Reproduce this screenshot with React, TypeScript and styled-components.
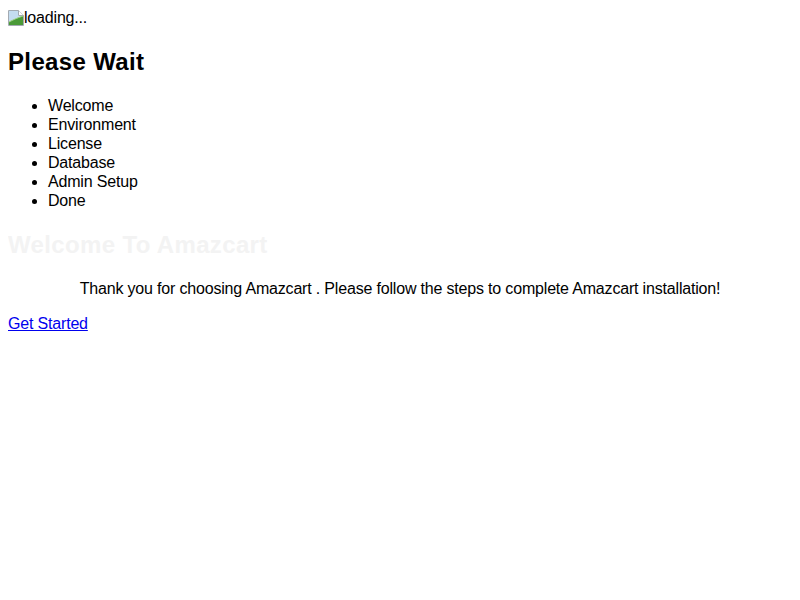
import React from "react";
import styled, { createGlobalStyle } from "styled-components";

const steps = ["Welcome", "Environment", "License", "Database", "Admin Setup", "Done"];

const GlobalStyle = createGlobalStyle`
  body {
    margin: 8px;
    font-family: "Liberation Sans", Arial, sans-serif;
    font-size: 16px;
    line-height: 19px;
    letter-spacing: -0.18px;
    color: #000;
    background: #fff;
  }
`;

const Loader = styled.div`
  height: 19px;
`;

const BrokenIcon = styled.svg`
  display: inline-block;
  width: 16px;
  height: 16px;
  vertical-align: -3px;
`;

const Heading = styled.h2<{ $faded?: boolean }>`
  font-size: 24px;
  line-height: 29px;
  letter-spacing: 0.35px;
  font-weight: bold;
  margin: 19.92px 0;
  color: ${(p) => (p.$faded ? "#f3f3f3" : "#000")};
`;

const StepList = styled.ul`
  margin: 16px 0;
  padding-left: 40px;
  list-style: disc;
`;

const Intro = styled.p`
  margin: 16px 0;
  text-align: center;
`;

const StartLink = styled.a`
  color: #0000ee;
  text-decoration: underline;
`;

function ImageIcon() {
  return (
    <BrokenIcon viewBox="0 0 16 16">
      <path d="M0.5 0.5h10l5 5v10h-15z" fill="#f2f5f8" stroke="#a3aab2" />
      <path d="M10.5 0.5v5h5" fill="#fff" stroke="#a3aab2" />
      <path d="M1 1h9v5h5v5L1 11z" fill="#c4dcf0" />
      <path d="M1 15V12c4-2 8-4 14-6v9z" fill="#4a9a38" />
      <path d="M1 12c4-2 8-4 14-6" fill="none" stroke="#9ad07c" />
    </BrokenIcon>
  );
}

export default function App() {
  return (
    <>
      <GlobalStyle />
      <Loader>
        <ImageIcon />
        <span>loading...</span>
      </Loader>
      <Heading>Please Wait</Heading>
      <StepList>
        {steps.map((s) => (
          <li key={s}>{s}</li>
        ))}
      </StepList>
      <Heading $faded>Welcome To Amazcart</Heading>
      <Intro>
        Thank you for choosing Amazcart . Please follow the steps to complete Amazcart installation!
      </Intro>
      <StartLink href="#">Get Started</StartLink>
    </>
  );
}
